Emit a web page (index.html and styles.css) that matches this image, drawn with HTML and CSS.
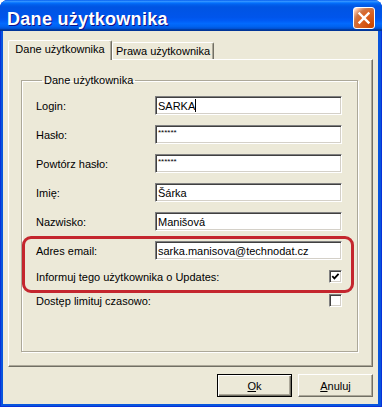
FILE: index.html
```html
<!DOCTYPE html>
<html>
  <head>
    <title>Dane użytkownika</title>
    <link rel="stylesheet" href="styles.css">
  </head>
  <body>
    <div class="window">
      <div class="titlebar">
        <span class="title">Dane użytkownika</span>
        <button class="close" type="button">
          <svg width="20" height="20" viewBox="0 0 20 20">
            <line x1="5.5" y1="5.5" x2="14.5" y2="14.5" stroke="#fff" stroke-width="2.4" stroke-linecap="square" />
            <line x1="14.5" y1="5.5" x2="5.5" y2="14.5" stroke="#fff" stroke-width="2.4" stroke-linecap="square" />
          </svg>
        </button>
      </div>
      <div class="client">
        <div class="tabs">
          <div class="tab active">Dane użytkownika</div>
          <div class="tab">Prawa użytkownika</div>
        </div>
        <div class="panel">
          <fieldset class="group">
            <legend>Dane użytkownika</legend>
            <div class="row">
              <label>Login:</label>
              <div class="field">SARKA<span class="caret"></span></div>
            </div>
            <div class="row">
              <label>Hasło:</label>
              <div class="field"><span class="stars">******</span></div>
            </div>
            <div class="row">
              <label>Powtórz hasło:</label>
              <div class="field"><span class="stars">******</span></div>
            </div>
            <div class="row">
              <label>Imię:</label>
              <div class="field">Šárka</div>
            </div>
            <div class="row">
              <label>Nazwisko:</label>
              <div class="field">Manišová</div>
            </div>
            <div class="row">
              <label>Adres email:</label>
              <div class="field">sarka.manisova@technodat.cz</div>
            </div>
            <div class="row check-row first-check">
              <label>Informuj tego użytkownika o Updates:</label>
              <span class="checkbox">
                <svg width="9" height="9" viewBox="0 0 9 9">
                  <polyline points="1.3,4.2 3.4,6.4 7.6,1.8" fill="none" stroke="#000" stroke-width="1.8" />
                </svg>
              </span>
            </div>
            <div class="row check-row">
              <label>Dostęp limituj czasowo:</label>
              <span class="checkbox"></span>
            </div>
          </fieldset>
        </div>
        <div class="buttons">
          <button class="btn default" type="button"><u>O</u>k</button>
          <button class="btn" type="button"><u>A</u>nuluj</button>
        </div>
      </div>
      <div class="highlight"></div>
    </div>
  </body>
</html>
```

FILE: styles.css
```css
body {
  margin: 0;
  font-family: "Liberation Sans", Arial, sans-serif;
  font-size: 11px;
  color: #000;
}

.window {
  position: relative;
  width: 382px;
  height: 407px;
  box-sizing: border-box;
  display: flex;
  flex-direction: column;
  background: #0855dd;
  border-radius: 8px 8px 0 0;
  box-shadow: inset 1px 0 #0831d9, inset -1px -1px #0831d9;
  overflow: hidden;
}

.titlebar {
  height: 31px;
  flex: none;
  display: flex;
  align-items: flex-start;
  background: linear-gradient(#0058ee 0%, #3593ff 4%, #288eff 6%, #127dff 8%, #036ffc 10%, #0262ee 14%, #0057e5 20%, #0054e3 24%, #0055eb 56%, #005bf5 66%, #026afe 76%, #0062ef 86%, #0052d6 92%, #0040ab 94%, #003092 100%);
}

.title {
  margin: 9px 0 0 7px;
  color: #fff;
  font-weight: bold;
  font-size: 18px;
  letter-spacing: 0.3px;
  text-shadow: 1px 1px #0f1089;
}

.close {
  margin: 7px 7px 0 auto;
  width: 22px;
  height: 22px;
  padding: 0;
  box-sizing: border-box;
  border: 1px solid #fff;
  border-radius: 3px;
  display: flex;
  align-items: center;
  justify-content: center;
  background: radial-gradient(circle at 90% 90%, #cc4600 0%, #dc6527 55%, #cd7546 70%, #ffccb2 90%, #fff 100%);
}

.client {
  flex: 1;
  margin: 0 4px 3px 3px;
  padding-top: 9px;
  background: #ece9d8;
  display: flex;
  flex-direction: column;
}

.tabs {
  height: 19px;
  display: flex;
  align-items: flex-end;
  padding-left: 5px;
}

.tab {
  box-sizing: border-box;
  height: 17px;
  width: 102px;
  text-align: center;
  line-height: 16px;
  border-top: 1px solid #fff;
  border-left: 1px solid #fff;
  border-right: 1px solid #716f64;
  box-shadow: inset -1px 0 #aca899;
  border-radius: 2px 2px 0 0;
}

.tab.active {
  height: 20px;
  width: 104px;
  margin-bottom: -1px;
  line-height: 17px;
  position: relative;
  z-index: 1;
  background: #ece9d8;
}

.panel {
  flex: none;
  height: 308px;
  box-sizing: border-box;
  margin: 0 5px;
  padding: 14px 14px 0 12px;
  border-top: 1px solid #fff;
  border-left: 1px solid #fff;
  border-right: 1px solid #716f64;
  border-bottom: 1px solid #716f64;
  box-shadow: inset -1px -1px #aca899;
}

.group {
  margin: 0;
  height: 278px;
  box-sizing: border-box;
  padding: 9px 0 0 14px;
  border: 1px solid #aca899;
  box-shadow: inset 1px 1px #fff, 1px 1px #fff;
}

.group legend {
  margin-left: 6px;
  padding: 0 2px;
  line-height: 13px;
}

.row {
  display: flex;
  align-items: center;
  width: 306px;
  height: 19px;
  margin-bottom: 10px;
}

.row label {
  width: 119px;
  flex: none;
}

.check-row {
  height: 13px;
  margin-bottom: 11px;
}

.check-row label {
  width: auto;
}

.first-check {
  margin-top: 2px;
}

.field {
  width: 187px;
  height: 19px;
  box-sizing: border-box;
  padding-left: 2px;
  display: flex;
  align-items: center;
  background: #fff;
  border: 1px solid;
  border-color: #808080 #fff #fff #808080;
  box-shadow: inset 1px 1px #404040, inset -1px -1px #d4d0c8;
}

.caret {
  display: inline-block;
  width: 1px;
  height: 13px;
  background: #000;
}

.stars {
  font-size: 8px;
  align-self: flex-start;
  margin-top: 2px;
}

.checkbox {
  margin-left: auto;
  width: 13px;
  height: 13px;
  box-sizing: border-box;
  display: flex;
  align-items: center;
  justify-content: center;
  background: #fff;
  border: 1px solid;
  border-color: #808080 #fff #fff #808080;
  box-shadow: inset 1px 1px #404040, inset -1px -1px #d4d0c8;
}

.buttons {
  display: flex;
  justify-content: flex-end;
  gap: 6px;
  margin-top: 7px;
  padding-right: 5px;
}

.btn {
  width: 75px;
  height: 23px;
  padding: 0;
  font-family: "Liberation Sans", Arial, sans-serif;
  font-size: 11px;
  color: #000;
  background: #ece9d8;
  border: 1px solid;
  border-color: #fff #716f64 #716f64 #fff;
  box-shadow: inset -1px -1px #aca899;
}

.btn.default {
  border-color: #000;
  box-shadow: inset 1px 1px #fff, inset -1px -1px #716f64, inset -2px -2px #aca899;
}

.highlight {
  position: absolute;
  left: 22px;
  top: 236px;
  width: 332px;
  height: 57px;
  box-sizing: border-box;
  border: 3px solid #c4262e;
  border-radius: 9px;
}
```
